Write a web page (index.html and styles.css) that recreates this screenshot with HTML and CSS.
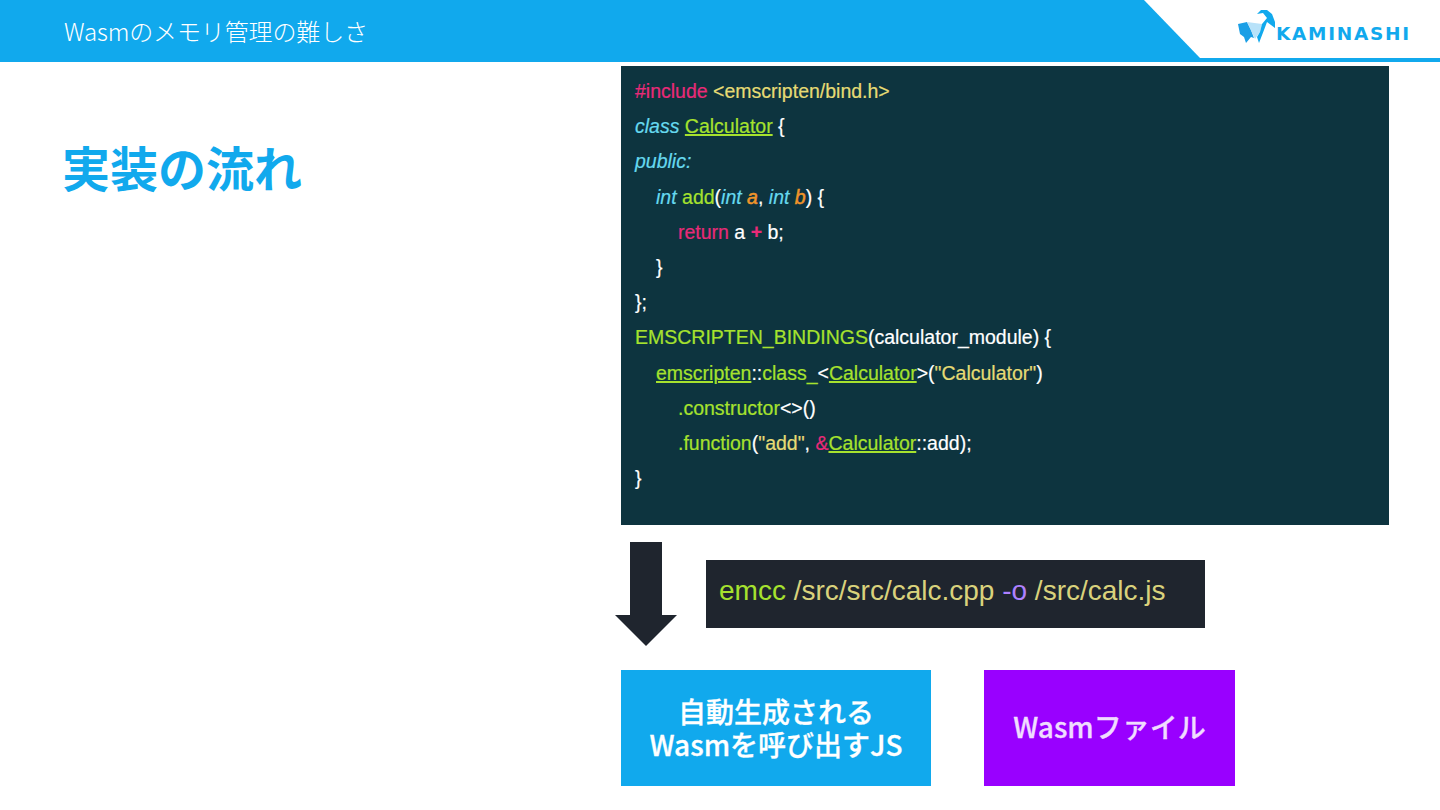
FILE: index.html
```html
<!DOCTYPE html>
<html lang="ja">
<head>
<meta charset="utf-8">
<title>Wasmのメモリ管理の難しさ</title>
<link rel="stylesheet" href="styles.css">
</head>
<body>
<div class="slide">
  <header class="header">
    <div class="header-title">Wasmのメモリ管理の難しさ</div>
    <div class="logo">
      <svg class="goat" width="37" height="34" viewBox="0 0 37 34">
        <path fill="#1b9fe6" d="M0 14 L9 12 L13 20 L16 28 L13 27 L8 33 L6 27 L2 24 Z"/>
        <path fill="#b8e2f9" d="M9 12 L24 14 L22 22 L17 29 Z"/>
        <path fill="#11a9ed" d="M24 14 L29 8 L25 3 L19 4 L23 0 L29 0 L34 4 L37 12 L37 18 L33 15 L29 12 L26 20 L21 33 L19 27 L22 22 Z"/>
      </svg>
      <span class="logo-text">KAMINASHI</span>
    </div>
  </header>
  <main class="main">
    <section class="left">
      <h1 class="heading">実装の流れ</h1>
    </section>
    <section class="right">
      <div class="code">
        <div class="ln"><span class="pk">#include</span> <span class="ye">&lt;emscripten/bind.h&gt;</span></div>
        <div class="ln"><span class="cy">class</span> <span class="gu">Calculator</span> {</div>
        <div class="ln"><span class="cy">public:</span></div>
        <div class="ln i1"><span class="cy">int</span> <span class="gr">add</span>(<span class="cy">int</span> <span class="or">a</span>, <span class="cy">int</span> <span class="or">b</span>) {</div>
        <div class="ln i2"><span class="pk">return</span> a <span class="pk plus">+</span> b;</div>
        <div class="ln i1">}</div>
        <div class="ln">};</div>
        <div class="ln"><span class="gr">EMSCRIPTEN_BINDINGS</span>(calculator_module) {</div>
        <div class="ln i1"><span class="gu">emscripten</span>::<span class="gr">class_</span>&lt;<span class="gu">Calculator</span>&gt;(<span class="ye">"Calculator"</span>)</div>
        <div class="ln i2"><span class="gr">.constructor</span>&lt;&gt;()</div>
        <div class="ln i2"><span class="gr">.function</span>(<span class="ye">"add"</span>, <span class="pk">&amp;</span><span class="gu">Calculator</span>::add);</div>
        <div class="ln">}</div>
      </div>
      <div class="build">
        <svg class="arrow" width="62" height="104" viewBox="0 0 62 104">
          <path fill="#1f252e" d="M15 0 H47 V73 H62 L31 104 L0 73 H15 Z"/>
        </svg>
        <div class="cmd"><span class="gr">emcc</span> <span class="ye-soft">/src/src/calc.cpp</span> <span class="pu">-o</span> <span class="ye-soft">/src/calc.js</span></div>
      </div>
      <div class="outputs">
        <div class="box box-blue">自動生成される<br>Wasmを呼び出すJS</div>
        <div class="box box-purple"><span class="box-label">Wasmファイル</span></div>
      </div>
    </section>
  </main>
</div>
</body>
</html>
```
FILE: styles.css
```css
* { box-sizing: border-box; }
html, body { margin: 0; padding: 0; background: #fff; }
.slide {
  width: 1440px;
  height: 810px;
  overflow: hidden;
  display: flex;
  flex-direction: column;
  font-family: "Noto Sans CJK JP", sans-serif;
}
.header {
  position: relative;
  height: 62px;
  flex: none;
  background: #11a9ed;
  display: flex;
  align-items: center;
  padding-left: 64px;
}
.header::after {
  content: "";
  position: absolute;
  left: 1144px;
  top: 0;
  width: 296px;
  height: 58px;
  background: #fff;
  clip-path: polygon(0 0, 100% 0, 100% 100%, 56px 100%);
}
.header-title {
  color: #fff;
  font-size: 24px;
  font-weight: 300;
  line-height: 32px;
  letter-spacing: -0.13px;
}
.logo {
  position: absolute;
  z-index: 1;
  left: 1238px;
  top: 10px;
  display: flex;
  align-items: flex-end;
}
.goat { display: block; }
.logo-text {
  color: #11a9ed;
  font-family: "DejaVu Sans", sans-serif;
  font-size: 18.5px;
  font-weight: 700;
  letter-spacing: 1.7px;
  line-height: 20px;
  margin-left: 1px;
}
.main { flex: 1; display: flex; }
.left { width: 621px; flex: none; padding: 76px 0 0 64px; }
.heading {
  margin: 0 0 0 -2px;
  color: #11a9ed;
  font-size: 48px;
  font-weight: 700;
  line-height: 56px;
}
.right { flex: 1; padding-top: 4px; display: flex; flex-direction: column; }
.code {
  width: 768px;
  height: 459px;
  background: #0d343f;
  padding: 8px 14px;
  color: #fff;
  font-family: "Liberation Sans", sans-serif;
  font-size: 19.5px;
  -webkit-text-stroke: 0.2px;
}
.ln { height: 35.2px; line-height: 35.2px; white-space: pre; }
.i1 { padding-left: 21px; }
.i2 { padding-left: 43px; }
.pk { color: #e92a78; }
.plus { font-weight: 700; }
.ye { color: #e6db74; }
.ye-soft { color: #d9d27c; }
.cy { color: #66d9ef; font-style: italic; }
.gr { color: #a6e22e; }
.gu { color: #a6e22e; text-decoration: underline; text-decoration-thickness: 2px; }
.or { color: #f0952a; font-style: italic; -webkit-text-stroke: 0.5px; }
.pu { color: #ae81ff; }
.build { display: flex; margin-top: 17px; height: 104px; margin-left: -6px; }
.arrow { display: block; flex: none; }
.cmd {
  margin-top: 18px;
  margin-left: 29px;
  width: 499px;
  height: 68px;
  background: #1f252e;
  padding-left: 13px;
  font-family: "Liberation Sans", sans-serif;
  font-size: 28px;
  line-height: 62px;
  white-space: pre;
}
.outputs { display: flex; margin-top: 24px; gap: 53px; }
.box {
  height: 116px;
  display: flex;
  align-items: center;
  justify-content: center;
  text-align: center;
  color: #fff;
  font-size: 28px;
  font-weight: 500;
  line-height: 33.5px;
  -webkit-text-stroke: 0.3px;
}
.box-blue { width: 310px; background: #11a9ed; }
.box-purple { width: 251px; background: #9900ff; color: #f0dcff; }
.box-label { padding-bottom: 3px; }
```
